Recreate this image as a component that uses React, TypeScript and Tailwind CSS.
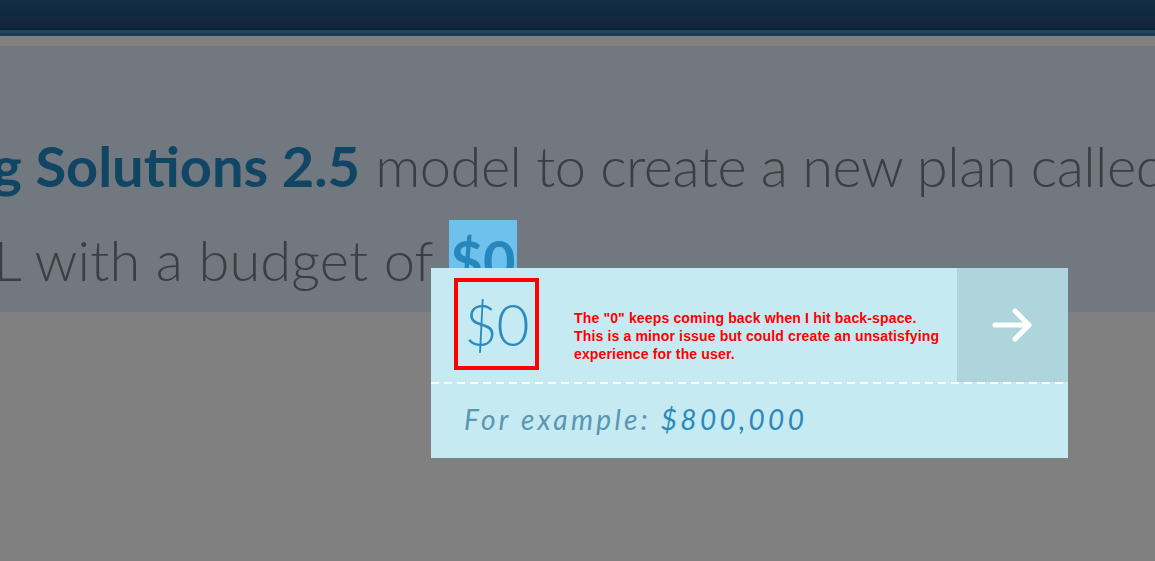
import React from "react";

export default function App() {
  return (
    <div className="relative w-[1155px] h-[561px] overflow-hidden bg-[#808080] font-['Lato',sans-serif]">
      {/* top bar */}
      <div className="h-[28px] bg-[linear-gradient(to_bottom,#132d44,#10263a)]" />
      <div className="h-[2px] bg-[#0e2132]" />
      <div className="h-[3px] bg-[#1f4864]" />
      <div className="h-[3px] bg-[#1b3952]" />
      <div className="h-[10px] bg-[#818181]" />
      {/* dimmed sentence area */}
      <div className="h-[266px] bg-[#717880] overflow-hidden pt-[72px]">
        <div className="whitespace-nowrap text-[56px] leading-[95px] text-[#3b3e42] font-light ml-[-235px]">
          <span className="font-bold text-[#104563]">Marketing Solutions 2.5</span>{" "}
          <span className="tracking-[-0.5px]">model to create a new plan called</span>
        </div>
        <div className="whitespace-nowrap text-[56px] leading-[95px] text-[#3b3e42] font-light ml-[-81px] mt-[-1px]">
          <span className="tracking-[0.15px]">SQL with a budget of</span>{" "}
          <span className="bg-[#6ec1ec] font-bold text-[#2587bc] px-[1.5px] py-[6px]">$0</span>
        </div>
      </div>

      {/* popup */}
      <div className="absolute left-[431px] top-[268px] w-[637px] h-[190px] bg-[#c6eaf2] flex flex-col">
        <div className="flex h-[114px]">
          <div className="flex-1 flex items-start pl-[23px] pt-[10px]">
            <div className="w-[85px] h-[92px] border-[4px] border-[#ff0000] flex items-center justify-center">
              <span className="text-[57px] font-light text-[#2a8bc0] leading-none tracking-[-1px]">$0</span>
            </div>
            <div className="ml-[35px] mt-[31px] font-['Liberation_Sans',Arial,sans-serif] font-bold text-[14px] leading-[18px] tracking-[0.15px] text-[#ff0000]">
              <div>The "0" keeps coming back when I hit back-space.</div>
              <div>This is a minor issue but could create an unsatisfying</div>
              <div>experience for the user.</div>
            </div>
          </div>
          <div className="w-[111px] h-[114px] bg-[#afd5dc] flex items-center justify-center">
            <svg width="46" height="40" viewBox="0 0 46 40" fill="none" stroke="white" strokeWidth="5" strokeLinecap="round" strokeLinejoin="round">
              <path d="M5 20 H39" />
              <path d="M25 6 L39 20 L25 34" />
            </svg>
          </div>
        </div>
        <div className="h-[2px] bg-[linear-gradient(to_right,#ffffff_62%,transparent_62%)] bg-[length:13px_2px]" />
        <div className="flex-1 pl-[33px] pt-[14px] italic text-[28px] tracking-[3.3px] font-normal">
          <span className="text-[#5a95b3]">For example: </span>
          <span className="text-[#2a88bd]">$800,000</span>
        </div>
      </div>
    </div>
  );
}
